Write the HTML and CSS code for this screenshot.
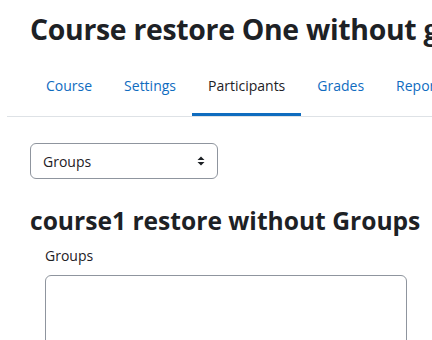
FILE: index.html
```html
<!DOCTYPE html>
<html lang="en">
<head>
<meta charset="utf-8">
<title>Course restore One without groups</title>
<link rel="stylesheet" href="styles.css">
</head>
<body>
<div class="page">
  <header class="page-header">
    <h1 class="page-title">Course restore One without groups</h1>
  </header>
  <nav class="secondary-nav">
    <ul class="tabs">
      <li class="tab"><a href="#">Course</a></li>
      <li class="tab"><a href="#">Settings</a></li>
      <li class="tab active"><a href="#">Participants</a></li>
      <li class="tab"><a href="#">Grades</a></li>
      <li class="tab"><a href="#">Reports</a></li>
    </ul>
  </nav>
  <main class="content">
    <div class="select-box">
      <span class="select-value">Groups</span>
      <svg class="select-arrows" width="8" height="10" viewBox="0 0 8 10"><path d="M4 0.5 L7.5 4 H0.5 Z M4 9.5 L7.5 6 H0.5 Z" fill="#1d2125"/></svg>
    </div>
    <h2 class="section-title">course1 restore without Groups</h2>
    <div class="field">
      <label class="field-label">Groups</label>
      <div class="listbox"></div>
    </div>
  </main>
</div>
</body>
</html>
```

FILE: styles.css
```css
html, body {
  margin: 0;
  padding: 0;
  background: #fff;
  overflow: hidden;
}
body {
  font-family: "Open Sans", "Noto Sans", sans-serif;
  color: #1d2125;
  width: 432px;
  height: 340px;
}
.page {
  padding-left: 7px;
}
.page-header {
  padding: 11px 0 0 23px;
  height: 49px;
  white-space: nowrap;
  overflow: hidden;
}
.page-title {
  margin: 0;
  font-size: 28.4px;
  font-weight: 700;
  line-height: 36px;
  letter-spacing: -0.3px;
}
.secondary-nav {
  border-bottom: 1px solid #dee2e6;
  overflow: hidden;
}
.tabs {
  list-style: none;
  margin: 0;
  padding: 0 0 0 23px;
  display: flex;
  white-space: nowrap;
}
.tab a {
  display: block;
  padding: 16px 16px 17px;
  line-height: 20px;
  font-size: 14px;
  color: #0f6cbf;
  text-decoration: none;
  border-bottom: 3px solid transparent;
}
.tab.active a {
  color: #1d2125;
  border-bottom-color: #0f6cbf;
}
.content {
  padding: 26px 0 0 23px;
}
.select-box {
  width: 188px;
  height: 36px;
  box-sizing: border-box;
  border: 1px solid #8f959e;
  border-radius: 6px;
  display: flex;
  align-items: center;
  justify-content: space-between;
  padding: 0 12px 0 12px;
  font-size: 14px;
}
.section-title {
  margin: 26px 0 0;
  font-size: 24.6px;
  font-weight: 700;
  line-height: 32px;
  white-space: nowrap;
}
.field {
  padding-left: 15px;
  margin-top: 9px;
}
.field-label {
  display: block;
  font-size: 14px;
  line-height: 20px;
}
.listbox {
  margin-top: 9px;
  width: 362px;
  height: 80px;
  box-sizing: border-box;
  border: 1px solid #8f959e;
  border-radius: 6px;
}
```
